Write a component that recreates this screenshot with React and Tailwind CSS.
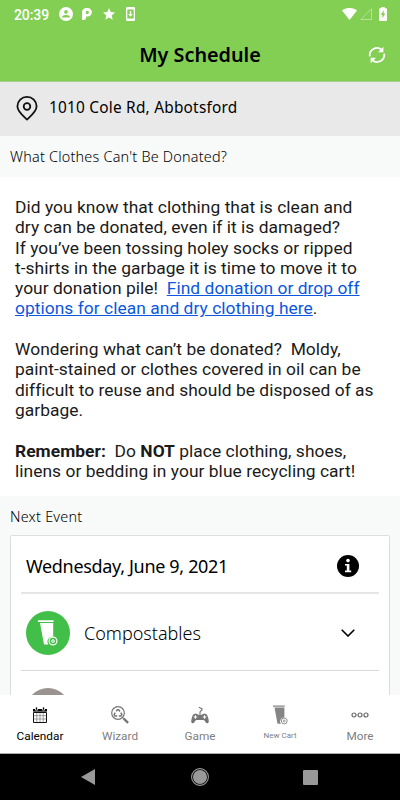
/**
 * Main App component: waste collection schedule screen.
 */
import React from 'react';

function StatusBar() {
  return (
    <div className="h-7 flex items-center pl-[14px] pr-[13px] text-white shrink-0">
      <span className="w-[45px] pt-[1px] font-[Roboto] text-[14px] tracking-[-0.1px] font-medium leading-none">20:39</span>
      <svg className="w-[14px] h-[14px] shrink-0" viewBox="0 0 14 14">
        <circle cx="7" cy="7" r="7" fill="#fff" />
        <circle cx="7" cy="4.9" r="1.9" fill="#82cf53" />
        <path d="M3.2 10.4V9.4C3.6 7.4 10.4 7.4 10.8 9.4v1z" fill="#82cf53" />
      </svg>
      <svg className="ml-[9px] w-[10px] h-[12px] shrink-0" viewBox="0 0 10 12">
        <path d="M0 12V4.5C0 1.5 2 0 4.5 0H5.6a4.3 4.3 0 0 1 0 8.6H3.9V10a2 2 0 0 1-2 2z" fill="#fff" />
        <path d="M3.9 6V4.2c0-.8.5-1.2 1.2-1.2h.4a1.4 1.4 0 0 1 0 2.9z" fill="#82cf53" />
      </svg>
      <svg className="ml-[11px] w-[12px] h-[12px] shrink-0" viewBox="0 0 12 12">
        <path d="M6 0l1.7 4.1 4.3.4-3.3 2.9 1 4.4L6 9.5l-3.7 2.3 1-4.4L0 4.5l4.3-.4z" fill="#fff" />
      </svg>
      <svg className="ml-[11px] w-[9px] h-[14px] shrink-0" viewBox="0 0 9 14">
        <rect width="9" height="14" rx="1.2" fill="#fff" />
        <path d="M1.3 2.5h6.4v9H1.3z" fill="#82cf53" />
        <path d="M3.8 4h1.4v3h1.6L4.5 9.8 2.2 7h1.6z" fill="#fff" />
      </svg>
      <svg className="ml-auto w-[15px] h-[12px] shrink-0" viewBox="0 0 15 12">
        <path d="M0 2.6C4-.9 11-.9 15 2.6L7.5 12z" fill="#fff" />
      </svg>
      <svg className="ml-[3px] w-[12px] h-[12px] shrink-0" viewBox="0 0 12 12">
        <path d="M11.5 .8v10.7H.9z" fill="none" stroke="#fff" strokeOpacity=".4" />
      </svg>
      <svg className="ml-[7px] w-[8px] h-[14px] shrink-0" viewBox="0 0 8 14">
        <path d="M2.3 0h3.4v1.3H7a1 1 0 0 1 1 1V13a1 1 0 0 1-1 1H1a1 1 0 0 1-1-1V2.3a1 1 0 0 1 1-1h1.3z" fill="#fff" />
        <path d="M4.7 3.3L1.8 8h1.7v3.3L6.3 6.6H4.7z" fill="#82cf53" />
      </svg>
    </div>
  );
}

function CartIcon({ className, ring }) {
  return (
    <svg className={className} viewBox="0 0 20 26">
      <path d="M0 .3h15.6v1.6H0zM2 2.9h13.2v13.6a5 5 0 0 0-4.6 8.1H6z" fill="currentColor" />
      <circle cx="15" cy="21" r="3.9" fill={ring} stroke="currentColor" strokeWidth="1.2" />
      <circle cx="15" cy="21" r="1.3" fill="none" stroke="currentColor" strokeWidth="1.1" />
    </svg>
  );
}

function CalendarIcon() {
  return (
    <svg className="w-[14px] h-[16px]" viewBox="0 0 14 16">
      <path d="M0 2h14v2.6H0z" fill="#000" />
      <path d="M2.5 0h2v3.2h-2zM9.5 0h2v3.2h-2z" fill="#000" stroke="#fff" strokeWidth=".7" />
      <path d="M3.8 6v9M7 6v9M10.2 6v9M1 8.7h12M1 12h12" fill="none" stroke="#888" strokeWidth=".8" />
      <path d="M.5 5.5v10h13v-10z" fill="none" stroke="#111" />
    </svg>
  );
}

function WizardIcon() {
  return (
    <svg className="w-[18px] h-[18px]" viewBox="0 0 18 18" fill="none" stroke="#757575">
      <circle cx="7" cy="7" r="6.3" strokeWidth="1.2" />
      <path d="M5.3 5.4L6.4 3.7h1.3l1.2 1.8M9.8 6.7l1 1.8-.8 1.4H7.8M6.2 9.9H4l-.8-1.4 1-1.8" strokeWidth="1.5" />
      <path d="M12.7 12.7l4.4 4.2" strokeWidth="2.3" />
      <path d="M11.3 11.3l1.5 1.5" strokeWidth="1.1" />
    </svg>
  );
}

function GameIcon() {
  return (
    <svg className="w-[18px] h-[18px]" viewBox="0 0 18 18">
      <path d="M9 8.5V6.4c0-1.8 2.2-1.4 2-3.2C10.8 1.8 8 2.6 8.3.8" fill="none" stroke="#757575" strokeWidth="1.2" />
      <path d="M4 7.8h2.2l.6 1h4.4l.6-1H14c1.7 0 2.4 1.2 3 3.5.6 2.4 1.6 5.6-.5 6-1.8.3-2.1-2.6-3.8-3.4H5.3c-1.7.8-2 3.7-3.8 3.4-2.1-.4-1.1-3.6-.5-6C1.6 9 2.3 7.8 4 7.8z" fill="#757575" />
      <path d="M4.4 9.2v3.6M2.6 11h3.6M13.6 9.2v3.6M11.8 11h3.6" stroke="#fff" strokeWidth="1" />
    </svg>
  );
}

function MoreIcon() {
  return (
    <svg className="w-[18px] h-[6px]" viewBox="0 0 18 6" fill="none" stroke="#666" strokeWidth="1.2">
      <circle cx="3" cy="3" r="2" />
      <circle cx="9" cy="3" r="2" />
      <circle cx="15" cy="3" r="2" />
    </svg>
  );
}

const tabs = [
  { label: 'Calendar', icon: <CalendarIcon />, style: 'text-[11.8px] text-black' },
  { label: 'Wizard', icon: <WizardIcon />, style: 'text-[11.8px] text-[#808080]' },
  { label: 'Game', icon: <GameIcon />, style: 'text-[11.8px] text-[#808080]' },
  { label: 'New Cart', icon: <CartIcon className="w-[15px] h-5 text-[#858585]" ring="#fff" />, style: 'text-[8px] text-[#808080]' },
  { label: 'More', icon: <MoreIcon />, style: 'text-[11.8px] text-[#808080]' },
];

function TabBar() {
  return (
    <nav className="h-[59px] shrink-0 flex bg-white border-b border-[#aaa] font-[Roboto]">
      {tabs.map((t) => (
        <div key={t.label} className="flex-1 flex flex-col items-center pt-[10px]">
          <div className="h-5 flex items-center">{t.icon}</div>
          <span className={`mt-[3px] h-4 leading-4 whitespace-nowrap ${t.style}`}>{t.label}</span>
        </div>
      ))}
    </nav>
  );
}

function SystemNav() {
  return (
    <div className="h-[46px] shrink-0 bg-black flex items-center justify-between pl-[81px] pr-[82px]">
      <svg className="w-[14px] h-[16px]" viewBox="0 0 14 16">
        <path d="M14 0v16L0 8z" fill="#999" />
      </svg>
      <svg className="ml-[1px] w-[18px] h-[18px]" viewBox="0 0 18 18">
        <circle cx="9" cy="9" r="8.4" fill="none" stroke="#999" strokeWidth="1.1" />
        <circle cx="9" cy="9" r="7" fill="#999" />
      </svg>
      <div className="w-[15px] h-[15px] rounded-[1px] bg-[#999]" />
    </div>
  );
}

export default function App() {
  return (
    <div className="w-[400px] h-[800px] flex flex-col overflow-hidden bg-[#f8faf9] font-['Noto_Sans',sans-serif] text-black">
      {/* Top bar */}
      <header className="h-[82px] shrink-0 bg-[#82cf53] flex flex-col border-b border-[#a9cf90]">
        <StatusBar />
        <div className="flex-1 grid grid-cols-[40px_1fr_40px] items-center">
          <h1 className="col-start-2 text-center text-[19.8px] font-semibold leading-none whitespace-nowrap">My Schedule</h1>
          <svg className="ml-[8px] w-[18px] h-[18px]" viewBox="0 0 18 18" fill="none" stroke="#fff" strokeWidth="1.8">
            <path d="M1.8 10.3A7.2 7.2 0 0 1 13.6 3.8M16.2 7.7A7.2 7.2 0 0 1 4.4 14.2" />
            <path d="M15.4.8v5.4H10zM2.6 17.2v-5.4H8z" fill="#fff" stroke="none" />
          </svg>
        </div>
      </header>

      <div className="h-[54px] shrink-0 bg-[#e9e9e9] flex items-center pl-[16px] pb-[1px]">
        <svg className="w-[22px] h-[25px]" viewBox="0 0 22 25" fill="none" stroke="#111" strokeWidth="1.8">
          <path d="M11 23.6C8 20.8 1.4 15.7 1.4 10.3a9.6 9.4 0 0 1 19.2 0C20.6 15.7 14 20.8 11 23.6z" strokeLinejoin="round" />
          <circle cx="11" cy="10.5" r="3.3" />
        </svg>
        <span className="ml-[11px] pb-[2px] text-[15.4px] leading-none tracking-[0.22px] whitespace-nowrap">1010 Cole Rd, Abbotsford</span>
      </div>

      <h2 className="h-[41px] shrink-0 pl-[10px] flex items-center text-[14.4px] tracking-[0.22px] font-light">What Clothes Can't Be Donated?</h2>

      <section className="h-[319px] shrink-0 bg-white pl-[15px] pt-5 font-[Roboto] text-[17.4px] tracking-[0.04px] leading-[20.3px] whitespace-pre text-[#1a1a1a]">
        <p>Did you know that clothing that is clean and</p>
        <p>dry can be donated, even if it is damaged?</p>
        <p>If you’ve been tossing holey socks or ripped</p>
        <p>t-shirts in the garbage it is time to move it to</p>
        <p>your donation pile!{'  '}<a className="underline text-[#0b57e0]">Find donation or drop off</a></p>
        <p><a className="underline text-[#0b57e0]">options for clean and dry clothing here</a>.</p>
        <p className="mt-[20.3px]">Wondering what can’t be donated?{'  '}Moldy,</p>
        <p>paint-stained or clothes covered in oil can be</p>
        <p>difficult to reuse and should be disposed of as</p>
        <p>garbage.</p>
        <p className="mt-[20.3px]"><b>Remember:</b>{'  '}Do <b>NOT</b> place clothing, shoes,</p>
        <p>linens or bedding in your blue recycling cart!</p>
      </section>

      <h2 className="h-[39px] shrink-0 pl-[10px] pt-[2px] flex items-center text-[14.4px] tracking-[0.22px] font-light">Next Event</h2>

      {/* Next event card */}
      <main className="flex-1 min-h-0 overflow-hidden px-[10px]">
        <div className="h-[240px] bg-white border border-[#dcdedd] rounded-[2px] px-[10px]">
          <div className="h-[58px] pt-[4px] flex items-center justify-between pl-[5px] pr-[20.5px] border-b-2 border-[#e6e6e6]">
            <span className="text-[18px] tracking-[-0.33px] leading-none whitespace-nowrap">Wednesday, June 9, 2021</span>
            <svg className="w-[22px] h-[22px]" viewBox="0 0 22 22">
              <circle cx="11" cy="11" r="11" fill="#000" />
              <circle cx="11" cy="5.6" r="1.8" fill="#fff" />
              <path d="M8 9h4.4v6.6h1.8v1.6H8v-1.6h1.8v-5H8z" fill="#fff" />
            </svg>
          </div>
          <div className="h-[77px] pt-[2px] flex items-center pl-[5px] pr-[24.5px] border-b border-[#d8d8d8]">
            <div className="w-11 h-11 rounded-full bg-[#42bf48] flex items-center justify-center text-white">
              <CartIcon className="w-5 h-[26px]" ring="#42bf48" />
            </div>
            <span className="ml-[14px] text-[18px] font-light leading-none whitespace-nowrap">Compostables</span>
            <svg className="ml-auto w-[14px] h-[8px]" viewBox="0 0 14 8" fill="none" stroke="#000" strokeWidth="1.6">
              <path d="M.7.7L7 7 13.3.7" />
            </svg>
          </div>
          <div className="pl-[5px] pt-[17px]">
            <div className="w-11 h-11 rounded-full bg-[#9b9390]" />
          </div>
        </div>
      </main>

      <TabBar />
      <SystemNav />
    </div>
  );
}
